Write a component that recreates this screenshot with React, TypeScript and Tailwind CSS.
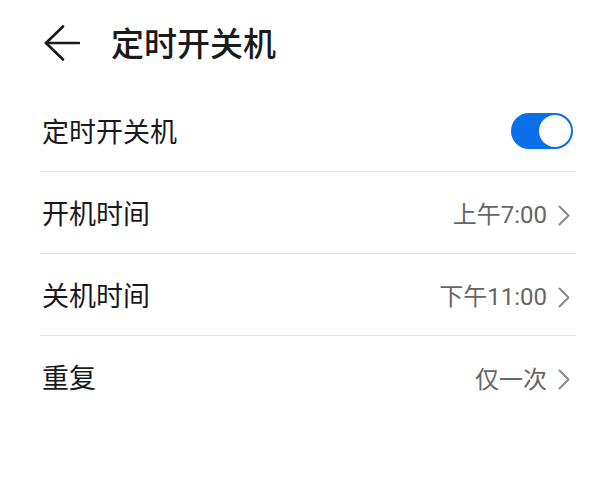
import { useState } from 'react'

// Scheduled power on/off settings page

interface SettingRow {
  label: string
  value: string
}

const ROWS: SettingRow[] = [
  { label: '开机时间', value: '上午7:00' },
  { label: '关机时间', value: '下午11:00' },
  { label: '重复', value: '仅一次' },
]

const FONT = "font-['Roboto','Noto_Sans_CJK_SC',sans-serif]"

function BackArrow() {
  return (
    <svg width="36" height="36" viewBox="0 0 36 36" fill="none" stroke="#1a1a1a" strokeWidth="2.6" strokeLinecap="round" strokeLinejoin="round">
      <path d="M2 18 H35" />
      <path d="M19 1.5 L2 18 L19 34.5" />
    </svg>
  )
}

function Chevron() {
  return (
    <svg width="12" height="21" viewBox="0 0 12 21" fill="none" stroke="#8a8a8a" strokeWidth="2" strokeLinecap="round" strokeLinejoin="round">
      <path d="M1.5 1.5 L10.5 10.5 L1.5 19.5" />
    </svg>
  )
}

function Toggle({ on, onChange }: { on: boolean; onChange: (v: boolean) => void }) {
  return (
    <button
      onClick={() => onChange(!on)}
      className={`mr-[3px] flex h-[36px] w-[62px] items-center rounded-full p-[2px] ${on ? 'justify-end bg-[#0a6fe8]' : 'justify-start bg-[#d4d4d4]'}`}
    >
      <span className="block h-[32px] w-[32px] rounded-full bg-white" />
    </button>
  )
}

export default function App() {
  const [enabled, setEnabled] = useState(true)

  return (
    <div className={`h-[500px] w-[614px] bg-white ${FONT}`}>
      {/* Header */}
      <div className="flex h-[90px] items-center pb-[4px] pl-[44px]">
        <BackArrow />
        <h1 className="ml-[31px] pt-[3px] text-[33px] font-medium leading-none text-[#1a1a1a]">定时开关机</h1>
      </div>

      <div className="pl-[40px] pr-[38px]">
        {/* Master switch */}
        <div className="flex h-[82px] items-center justify-between border-b border-[#e6e6e6] pl-[2px]">
          <span className="pt-[5px] text-[27px] leading-none text-[#1a1a1a]">定时开关机</span>
          <Toggle on={enabled} onChange={setEnabled} />
        </div>

        {ROWS.map((row, i) => (
          <div
            key={row.label}
            className={`flex h-[82px] items-center justify-between pl-[2px] pt-[5px] ${i < ROWS.length - 1 ? 'border-b border-[#e6e6e6]' : ''}`}
          >
            <span className="text-[27px] leading-none text-[#1a1a1a]">{row.label}</span>
            <div className="flex items-center gap-[11px] pr-[6px]">
              <span className="text-[24px] leading-none text-[#666666]">{row.value}</span>
              <Chevron />
            </div>
          </div>
        ))}
      </div>
    </div>
  )
}
